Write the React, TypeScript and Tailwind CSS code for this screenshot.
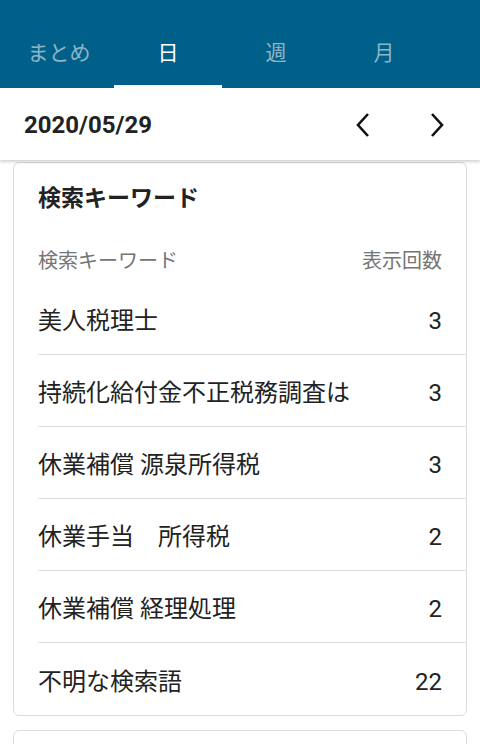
import React from "react";

const rows: [string, string][] = [
  ["美人税理士", "3"],
  ["持続化給付金不正税務調査は", "3"],
  ["休業補償 源泉所得税", "3"],
  ["休業手当\u3000所得税", "2"],
  ["休業補償 経理処理", "2"],
  ["不明な検索語", "22"],
];

const tabs = ["まとめ", "日", "週", "月"];

export default function App() {
  return (
    <div
      className="w-[480px] h-[744px] overflow-hidden bg-white"
      style={{ fontFamily: "Roboto, 'Noto Sans CJK JP', sans-serif" }}
    >
      <div className="h-[88px] bg-[#006089] flex items-end pl-[4px] pr-[6px]">
        {tabs.map((t, i) => (
          <div
            key={t}
            className={
              (i === 0 ? "w-[110px] " : "w-[108px] ") +
              "h-[70px] flex flex-col items-center " +
              (i === 1 ? "text-white" : "text-[#8cb5c8]")
            }
          >
            <div className="flex-1 flex items-center pt-[4px] text-[21px] leading-none">{t}</div>
            <div className={"h-[3px] w-full " + (i === 1 ? "bg-white" : "bg-transparent")} />
          </div>
        ))}
      </div>
      <div className="relative h-[72px] bg-white flex items-center pl-[24px] pt-[2px] shadow-[0_2px_3px_rgba(0,0,0,0.18)] z-10">
        <div className="flex-1 text-[24px] font-bold text-[#222]">2020/05/29</div>
        <div className="flex items-center">
          <div className="w-[74px] h-[70px] flex items-center justify-center">
            <svg width="16" height="26" viewBox="0 0 16 26">
              <polyline points="13,2 3,13 13,24" fill="none" stroke="#111" strokeWidth="2.6" />
            </svg>
          </div>
          <div className="w-[74px] h-[70px] flex items-center justify-center mr-[6px]">
            <svg width="16" height="26" viewBox="0 0 16 26">
              <polyline points="3,2 13,13 3,24" fill="none" stroke="#111" strokeWidth="2.6" />
            </svg>
          </div>
        </div>
      </div>
      <div className="px-[13px] pt-[2px] flex flex-col gap-[14px]">
        <div className="border border-[#dcdcdc] rounded-[6px] bg-white">
          <div className="h-[72px] flex items-center pl-[24px] text-[23px] font-bold text-[#222]">
            検索キーワード
          </div>
          <div className="h-[48px] flex items-center justify-between pl-[24px] pr-[24px] pt-[4px] text-[20px] text-[#757575]">
            <span>検索キーワード</span>
            <span>表示回数</span>
          </div>
          {rows.map(([k, v], i) => (
            <div key={i} className="pl-[24px]">
              <div
                className={
                  "h-[72px] flex items-center justify-between pr-[24px] pt-[5px] text-[24px] text-[#222] " +
                  (i < rows.length - 1 ? "border-b border-[#dedede]" : "")
                }
              >
                <span>{k}</span>
                <span>{v}</span>
              </div>
            </div>
          ))}
        </div>
        <div className="border border-[#dcdcdc] rounded-[6px] bg-white h-[60px]" />
      </div>
    </div>
  );
}
